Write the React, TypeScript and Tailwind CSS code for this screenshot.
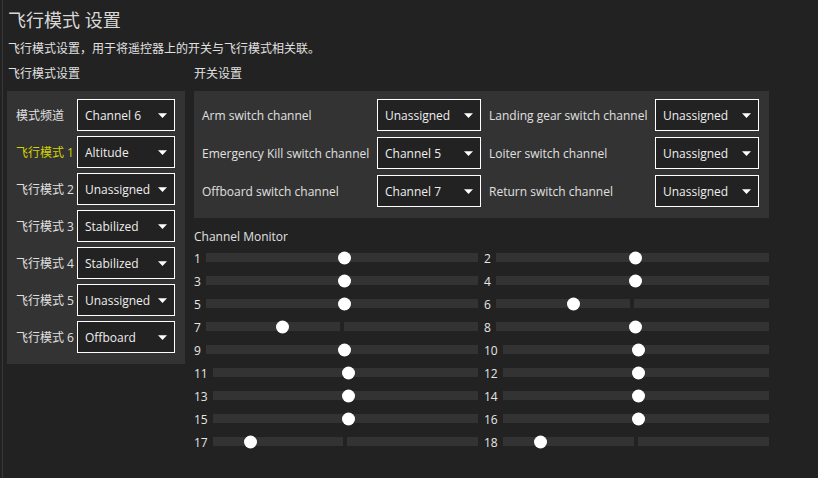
import React from 'react';

const font = { fontFamily: '"Open Sans", "Noto Sans CJK SC", sans-serif' };

const Dropdown: React.FC<{ value: string; className?: string }> = ({ value, className }) => (
    <div className={`h-[32px] border border-white bg-[#222222] flex items-center justify-between pl-[7px] pr-[7px] text-[12px] text-[#eeeeee] ${className ?? ''}`}>
        <span className="translate-y-[1px]">{value}</span>
        <svg width="9" height="5" viewBox="0 0 9 5">
            <path d="M0 0.3 H9 L4.5 5 Z" fill="#ffffff" />
        </svg>
    </div>
);

const ChannelBar: React.FC<{ n: number; v: number }> = ({ n, v }) => (
    <div className="flex items-center h-[23px]">
        <span className="text-[12px] text-[#e6e6e6] leading-none translate-y-[1px]">{n}</span>
        <div className="relative flex-1 ml-[5px] flex gap-[4px] h-[9px]">
            <div className="flex-1 bg-[#333333]" />
            <div className="flex-1 bg-[#333333]" />
            <div
                className="absolute top-1/2 -translate-y-1/2 w-[13px] h-[13px] rounded-full bg-white"
                style={{ left: `calc(${v} * (100% - 13px))` }}
            />
        </div>
    </div>
);

const modes = [
    { label: '飞行模式 1', value: 'Altitude', active: true },
    { label: '飞行模式 2', value: 'Unassigned' },
    { label: '飞行模式 3', value: 'Stabilized' },
    { label: '飞行模式 4', value: 'Stabilized' },
    { label: '飞行模式 5', value: 'Unassigned' },
    { label: '飞行模式 6', value: 'Offboard' },
];

const switches = [
    ['Arm switch channel', 'Unassigned', 'Landing gear switch channel', 'Unassigned'],
    ['Emergency Kill switch channel', 'Channel 5', 'Loiter switch channel', 'Unassigned'],
    ['Offboard switch channel', 'Channel 7', 'Return switch channel', 'Unassigned'],
];

const channels = [0.511, 0.511, 0.511, 0.511, 0.511, 0.272, 0.272, 0.511, 0.511, 0.511, 0.511, 0.511, 0.511, 0.511, 0.511, 0.511, 0.124, 0.124];

export default function App() {
    return (
        <div className="w-[818px] h-[478px] bg-[#222222] overflow-hidden flex text-[#e0e0e0]" style={font}>
            <div className="w-[2px]" />
            <div className="w-px bg-[#383838]" />
            <div className="flex-1 pl-[4px]">
                <div className="pl-px mt-[8px] text-[18px] leading-[24px] text-[#d8d8d8]">飞行模式 设置</div>
                <div className="pl-px mt-[9px] text-[12px] leading-[16px]">飞行模式设置，用于将遥控器上的开关与飞行模式相关联。</div>

                <div className="flex mt-[9px] gap-[9px]">
                    <div className="w-[178px]">
                        <div className="pl-px text-[12px] leading-[16px] mb-[9px]">飞行模式设置</div>
                        <div className="bg-[#333333] pl-[9px] pr-[10px] pt-[8px] pb-[11px] flex flex-col gap-[5px]">
                            <div className="flex items-center">
                                <span className="w-[61px] text-[12px] translate-y-[1px]">模式频道</span>
                                <Dropdown value="Channel 6" className="w-[98px]" />
                            </div>
                            {modes.map(m => (
                                <div key={m.label} className="flex items-center">
                                    <span className={`w-[61px] text-[12px] translate-y-[1px] ${m.active ? 'text-[#d4d400]' : ''}`}>{m.label}</span>
                                    <Dropdown value={m.value} className="w-[98px]" />
                                </div>
                            ))}
                        </div>
                    </div>

                    <div className="w-[575px]">
                        <div className="text-[12px] leading-[16px] mb-[9px]">开关设置</div>
                        <div className="bg-[#333333] pl-[8px] pr-[10px] pt-[8px] pb-[11px] flex flex-col gap-[6px]">
                            {switches.map(s => (
                                <div key={s[0]} className="flex items-center text-[12px]">
                                    <span className="w-[175px] translate-y-[1px]">{s[0]}</span>
                                    <Dropdown value={s[1]} className="w-[104px]" />
                                    <span className="w-[166px] ml-[8px] translate-y-[1px]">{s[2]}</span>
                                    <Dropdown value={s[3]} className="w-[104px]" />
                                </div>
                            ))}
                        </div>

                        <div className="mt-[11px] text-[12px] leading-[16px]">Channel Monitor</div>
                        <div className="mt-[1px] grid grid-cols-[284px_285px] gap-x-[6px]">
                            {channels.map((v, i) => (
                                <ChannelBar key={i} n={i + 1} v={v} />
                            ))}
                        </div>
                    </div>
                </div>
            </div>
        </div>
    );
}
